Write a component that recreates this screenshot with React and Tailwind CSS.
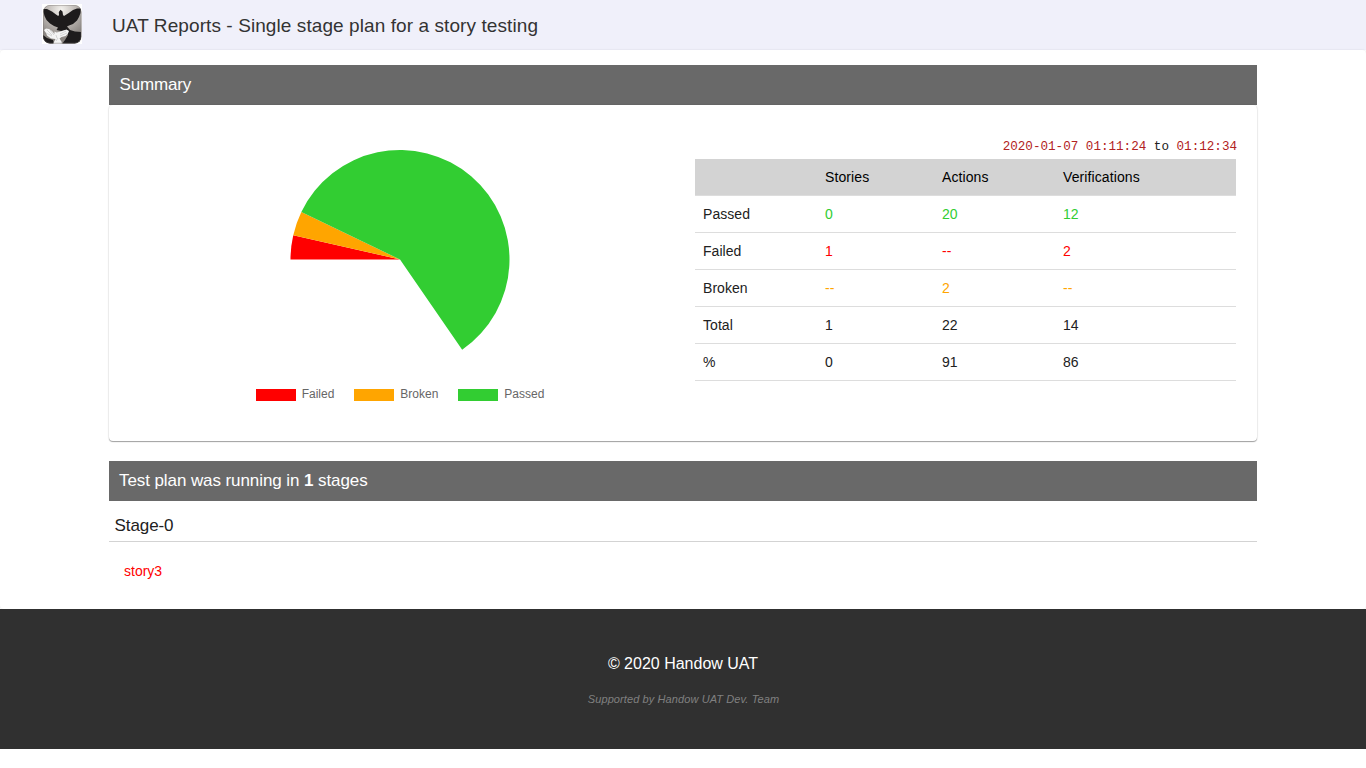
import React from "react";

const rows = [
  ["Passed", "0", "20", "12", "text-[#32cd32]"],
  ["Failed", "1", "--", "2", "text-[#ff0000]"],
  ["Broken", "--", "2", "--", "text-[#ffa500]"],
  ["Total", "1", "22", "14", "text-[#212121]"],
  ["%", "0", "91", "86", "text-[#212121]"],
];

const legend = [
  ["Failed", "bg-[#ff0000]"],
  ["Broken", "bg-[#ffa500]"],
  ["Passed", "bg-[#32cd32]"],
];

const slices = [
  [180, 192.86, "#ff0000"],
  [192.86, 205.72, "#ffa500"],
  [205.72, 415.4, "#32cd32"],
];

function slicePath(from, to) {
  const r = 109.5;
  const point = (deg) => {
    const a = (deg * Math.PI) / 180;
    return `${110 + r * Math.cos(a)} ${110.5 + r * Math.sin(a)}`;
  };
  return `M110 110.5L${point(from)}A${r} ${r} 0 ${to - from > 180 ? 1 : 0} 1 ${point(to)}Z`;
}

function Logo() {
  return (
    <svg width="40" height="40" viewBox="0 0 40 40" className="block">
      <defs>
        <radialGradient id="sky" cx="0.48" cy="0.14" r="0.72">
          <stop offset="0" stopColor="#f4f2ee" />
          <stop offset="0.45" stopColor="#c4bfbb" />
          <stop offset="1" stopColor="#8a8581" />
        </radialGradient>
        <clipPath id="tile">
          <rect x="1" y="1" width="38.5" height="38.5" rx="7" />
        </clipPath>
      </defs>
      <rect width="40" height="40" fill="#fff" />
      <g clipPath="url(#tile)">
        <rect width="40" height="40" fill="url(#sky)" />
        <path
          d="M1 5L5 5L10 7.5L14 10.5L16.2 12L17 11L16.8 8L18.5 5.8L20.5 7.5L21 11L22 12L26 9.5L31 6L35 4.5L39 4.5L38.5 9L37 13L35 16.5L31 20L27 21.5L25 22.5L28 26L33 27.5L39 28V40H20L23 36L26 31L25 26L19 27L14.5 26L16 23.5L12 22L8 19.5L4.5 16L2.5 12L1.5 8Z"
          fill="#1d1b1c"
        />
        <path d="M1 31L5 34L11 36L12 40H5L1 36Z" fill="#1d1b1c" />
        <path
          d="M2 26L4 24.5L7 25L10 27L12.5 30L12.5 27.5L14.5 28.5L17 28L20 27L24.5 25.5L27 27L26 29.5L23.5 32L19.5 33L17.5 34.5L20 38.5L18 40H11L13.5 35L9 34.5L5 31.5L4 29Z"
          fill="#f4f4f4"
        />
        <path
          d="M5 26l5 5M8 26l4 5M4 29l6 3M24 27l-6 3M25 29l-7 3M14 31l1 3M16 34l-2 3"
          stroke="#b5b5b5"
          strokeWidth="0.5"
          fill="none"
        />
        <rect x="1.25" y="1.25" width="38" height="38" rx="6.7" fill="none" stroke="#777370" strokeWidth="0.5" />
      </g>
    </svg>
  );
}

export default function App() {
  return (
    <div className="flex h-[768px] flex-col overflow-hidden bg-white font-['Liberation_Sans',Arial,sans-serif] text-sm text-[#212121]">
      <header className="flex h-[50px] shrink-0 items-start bg-[#f0f0fa] pl-[42px] pt-1">
        <Logo />
        <h1 className="ml-[30px] mt-2 text-[19px] leading-[28px] tracking-[0.085px] text-[#333333]">
          UAT Reports - Single stage plan for a story testing
        </h1>
      </header>

      <main className="h-[559px] shrink-0 rounded bg-white px-[109px] pt-[15px] shadow-[0_0_2px_rgba(0,0,0,0.12)]">
        <section>
          <h2 className="flex h-10 items-center bg-[#696969] pl-[10.5px] text-[17px] tracking-[-0.15px] text-white">
            Summary
          </h2>
          <div className="flex h-[336px] rounded bg-white shadow-[0_1px_1px_rgba(0,0,0,0.35),0_0_2px_rgba(0,0,0,0.15)]">
            <div className="flex w-[586px] flex-col items-center pr-1 pt-[44px]">
              <svg width="220" height="220" viewBox="0 0 220 220" className="block">
                {slices.map(([from, to, color]) => (
                  <path key={color} d={slicePath(from, to)} fill={color} />
                ))}
              </svg>
              <div className="mt-[20px] flex gap-5">
                {legend.map(([name, color]) => (
                  <div key={name} className="flex items-start gap-1.5 text-xs leading-[12px] text-[#666666]">
                    <span className={`h-3 w-10 ${color}`} />
                    <span className="-mt-px">{name}</span>
                  </div>
                ))}
              </div>
            </div>
            <div className="w-[541px] pt-[34px]">
              <div className="-mr-px h-5 whitespace-nowrap text-right font-['Liberation_Mono','Courier_New',monospace] text-[12.6px] leading-[17px]">
                <span className="text-[#b22222]">2020-01-07 01:11:24</span> to{" "}
                <span className="text-[#b22222]">01:12:34</span>
              </div>
              <div className="grid h-[37px] grid-cols-[122px_117px_121px_1fr] items-center border-b border-[#dddddd] bg-[#d3d3d3] pl-2 tracking-[0.1px] text-black">
                <span />
                <span>Stories</span>
                <span>Actions</span>
                <span>Verifications</span>
              </div>
              {rows.map(([name, a, b, c, color]) => (
                <div
                  key={name}
                  className="grid h-[37px] grid-cols-[122px_117px_121px_1fr] items-center border-b border-[#dddddd] pl-2 tracking-[0.05px]"
                >
                  <span>{name}</span>
                  <span className={color}>{a}</span>
                  <span className={color}>{b}</span>
                  <span className={color}>{c}</span>
                </div>
              ))}
            </div>
          </div>
        </section>

        <section className="mt-5">
          <h2 className="flex h-10 items-center bg-[#696969] pl-[10px] text-[17px] tracking-[-0.085px] text-white">
            <span>
              Test plan was running in <b>1</b> stages
            </span>
          </h2>
          <h3 className="h-[41px] border-b border-[#d3d3d3] pl-[5.5px] pt-3 text-[17px] leading-[26px] tracking-[-0.08px]">
            Stage-0
          </h3>
          <p className="pl-[15px] pt-[19px] leading-5 text-[#ff0000]">story3</p>
        </section>
      </main>

      <footer className="flex h-[140px] shrink-0 flex-col items-center bg-[#303030] pt-[43px]">
        <p className="text-base leading-6 text-white">© 2020 Handow UAT</p>
        <p className="mt-[15px] pl-px text-[11px] italic leading-4 tracking-[0.1px] text-[#808080]">
          Supported by Handow UAT Dev. Team
        </p>
      </footer>
    </div>
  );
}
